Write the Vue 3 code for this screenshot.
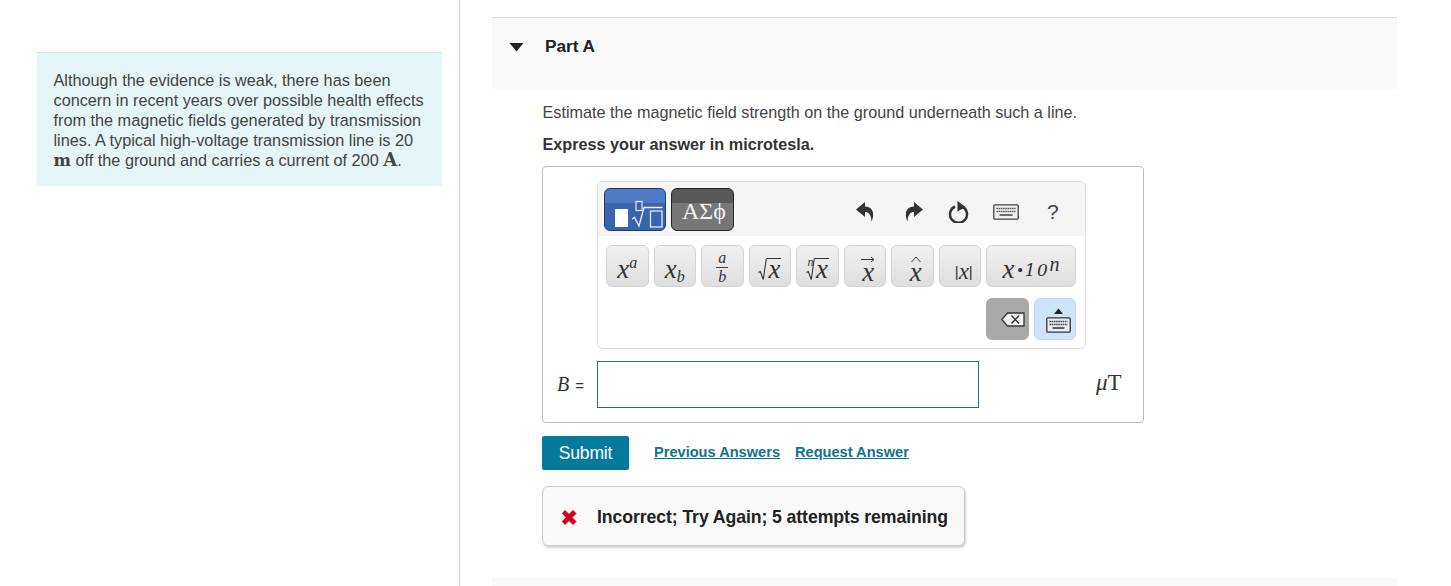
<template>
  <div class="page">
    <aside class="left-col">
      <div class="intro">
        Although the evidence is weak, there has been concern in recent years over possible health effects from the magnetic fields generated by transmission lines. A typical high-voltage transmission line is 20 <b class="unit">m</b> off the ground and carries a current of 200 <b class="unit big">A</b>.
      </div>
    </aside>

    <main class="right-col">
      <div class="part-head">
        <svg class="caret" width="15" height="10" viewBox="0 0 15 10"><path d="M0.5 1h14L7.5 9.500z" fill="#222" /></svg>
        <span>Part A</span>
      </div>

      <div class="part-body">
        <p class="prompt">Estimate the magnetic field strength on the ground underneath such a line.</p>
        <p class="prompt strong">Express your answer in microtesla.</p>

        <div class="answer-box">
          <div class="editor">
            <div class="editor-top">
              <button class="mode mode-on">
                <svg width="60" height="41" viewBox="0 0 60 41">
                  <rect x="10" y="20" width="13" height="18" fill="#fff" />
                  <rect x="31" y="12.500" width="6" height="9" fill="none" stroke="#dfe8f7" stroke-width="1.200" />
                  <path d="M27 30l2.500-1.500 4.500 8.500 5-18.500h18.500" fill="none" stroke="#eef3fb" stroke-width="1.300" />
                  <rect x="45.500" y="22" width="11.500" height="16" fill="none" stroke="#dfe8f7" stroke-width="1.300" />
                </svg>
              </button>
              <button class="mode mode-off">ΑΣϕ</button>

              <div class="tools">
                <svg class="tool undo" width="18" height="20" viewBox="0 0 18 20"><path d="M9 0L0 7.500 9 15v-5c3.500 0 6 2 6.500 9.500C18.500 13 18 5 9 4.500z" fill="#333" /></svg>
                <svg class="tool redo" width="18" height="20" viewBox="0 0 18 20"><path d="M9 0l9 7.500L9 15v-5c-3.500 0-6 2-6.500 9.500C-.5 13 0 5 9 4.500z" fill="#333" /></svg>
                <svg class="tool reset" width="21" height="22" viewBox="0 0 21 22"><path d="M7 5.500a8.500 8.500 0 1 0 7 0" fill="none" stroke="#333" stroke-width="2.500" /><path d="M9.500 0l8 6-8 4.500z" fill="#333" /></svg>
                <svg class="tool board" width="26" height="16" viewBox="0 0 26 16">
                  <rect x=".8" y=".8" width="24.400" height="14.400" rx="1" fill="#f1f1f1" stroke="#444" stroke-width="1.300" />
                  <path d="M3.500 4.500h19M3.500 7.500h19" stroke="#555" stroke-width="1.700" stroke-dasharray="1.600 .6" />
                  <path d="M6.500 11h13" stroke="#555" stroke-width="1.700" />
                </svg>
                <span class="help">?</span>
              </div>
            </div>

            <div class="key-row">
              <button class="key low"><i>x</i><sup><i>a</i></sup></button>
              <button class="key low"><i>x</i><sub><i>b</i></sub></button>
              <button class="key frac"><i>a</i><span class="bar"></span><i>b</i></button>
              <button class="key">
                <span class="rad">
                  <svg width="9" height="23" viewBox="0 0 9 23"><path d="M.3 14.500l2-1 3 8 3-21" fill="none" stroke="#333" stroke-width="1.100" /></svg>
                  <i class="over">x</i>
                </span>
              </button>
              <button class="key">
                <span class="rad">
                  <span class="idx"><i>n</i></span>
                  <svg width="9" height="23" viewBox="0 0 9 23"><path d="M.3 14.500l2-1 3 8 3-21" fill="none" stroke="#333" stroke-width="1.100" /></svg>
                  <i class="over">x</i>
                </span>
              </button>
              <button class="key accent">
                <svg width="14" height="7" viewBox="0 0 14 7"><path d="M0 3.500h13M10 1l3 2.500-3 2.500" fill="none" stroke="#333" stroke-width="1" /></svg>
                <i>x</i>
              </button>
              <button class="key accent">
                <svg width="10" height="7" viewBox="0 0 10 7"><path d="M.5 6L5 1l4.500 5" fill="none" stroke="#333" stroke-width="1" /></svg>
                <i>x</i>
              </button>
              <button class="key abs"><span>|</span><i>x</i><span>|</span></button>
              <button class="key wide low"><i>x</i><span class="dot">•</span><i class="ten">10</i><i class="pow">n</i></button>
            </div>

            <div class="key-row lower">
              <button class="key erase">
                <svg width="24" height="15" viewBox="0 0 24 15">
                  <path d="M6.500 1H23v13H6.500L.8 7.500z" fill="#f4f4f4" stroke="#333" stroke-width="1.300" />
                  <path d="M10.500 3.500l7.500 8M18 3.500l-7.500 8" stroke="#333" stroke-width="1.400" />
                </svg>
              </button>
              <button class="key kbd">
                <svg width="25" height="25" viewBox="0 0 25 25">
                  <path d="M8 6l4.500-5.500L17 6z" fill="#222" />
                  <rect x=".8" y="9.800" width="23.400" height="14.400" rx="1" fill="#e8eef5" stroke="#333" stroke-width="1.300" />
                  <path d="M3.500 13.500h18M3.500 16.500h18" stroke="#444" stroke-width="1.700" stroke-dasharray="1.600 .6" />
                  <path d="M6.500 20h12" stroke="#444" stroke-width="1.700" />
                </svg>
              </button>
            </div>
          </div>

          <div class="answer-row">
            <span class="var"><i>B</i> <span>=</span></span>
            <div class="field"></div>
            <span class="answer-unit"><i>μ</i>T</span>
          </div>
        </div>

        <div class="actions">
          <button class="submit">Submit</button>
          <a class="link first" href="#">Previous Answers</a>
          <a class="link" href="#">Request Answer</a>
        </div>

        <div class="feedback">
          <svg width="18" height="17" viewBox="0 0 18 17"><path d="M2.500 4.500L5 1.500 9 5.500 13 1.500 16 4.500 12 8.500 16 12.500 13 15.500 9 11.500 5 15.500 2.500 12.500 6 8.500z" fill="#d0021b" stroke="#d0021b" stroke-width="1" stroke-linejoin="round" /></svg>
          <span>Incorrect; Try Again; 5 attempts remaining</span>
        </div>
      </div>

      <div class="next-part"></div>
    </main>
  </div>
</template>

<script setup>
</script>

<style>
html, body { margin: 0; background: #fff; overflow: hidden; }
</style>

<style scoped>
.page {
  display: flex;
  width: 1451px; height: 586px;
  overflow: hidden;
  font-family: "Liberation Sans", Arial, sans-serif;
  color: #333;
  background: #fff;
}

.left-col {
  box-sizing: border-box;
  flex: none;
  width: 460px;
  padding: 52px 17px 0 37px;
  border-right: 1px solid #ccc;
}

.intro {
  box-sizing: border-box;
  width: 405px; height: 134px;
  padding: 17px 16px 0 16.500px;
  background: #e6f5f7;
  border-top: 1px solid #d5e5e5;
  font-size: 16.250px;
  line-height: 20px;
  color: #444;
}
.unit { font-family: "DejaVu Serif", serif; font-size: 16.500px; font-weight: 700; color: #444; }
.unit.big { font-size: 18px; }

.right-col {
  box-sizing: border-box;
  flex: none;
  width: 937px;
  padding: 17px 0 0 32px;
}

.part-head {
  box-sizing: border-box;
  display: flex; align-items: flex-start;
  height: 72px;
  padding: 18px 0 0 17px;
  background: #f9f9f9;
  border-top: 1px solid #ddd;
  font-size: 17.200px; font-weight: 700;
  line-height: 20px;
  color: #222;
}
.caret { margin: 6px 21px 0 0; }

.part-body { padding: 13px 0 0 50px; }

.prompt {
  margin: 0 0 12px .5px;
  font-size: 16.200px;
  line-height: 20px;
  color: #444;
}
.prompt.strong { font-weight: 700; color: #333; margin-bottom: 12px; }

.answer-box {
  box-sizing: border-box;
  width: 602px; height: 257px;
  padding: 14px 0 0 54px;
  border: 1px solid #bbb;
  border-radius: 4px;
}

.editor {
  box-sizing: border-box;
  width: 489px; height: 168px;
  border: 1px solid #ddd;
  border-radius: 6px;
  background: #fff;
}
.editor-top {
  display: flex; align-items: flex-start; gap: 5px;
  height: 54px;
  padding: 6px 0 0 6px;
  box-sizing: border-box;
  background: #f5f5f5;
  border-radius: 6px 6px 0 0;
}

.mode {
  box-sizing: border-box;
  flex: none;
  width: 62px; height: 43px;
  padding: 0;
  border: 1px solid #222;
  border-radius: 6px;
  display: flex; align-items: center; justify-content: center;
}
.mode-on { background: linear-gradient(#4f7bc2 0 33%, #3a64ad 33%); border-color: #1f3b70; }
.mode-off {
  width: 63px;
  padding: 4px 0 0 3px;
  background: linear-gradient(#585858 0 33%, #777 33%);
  color: #f2f2f2;
  font-family: "Liberation Serif", serif;
  font-size: 24px;
}

.tools {
  display: flex; align-items: center;
  height: 48px;
  margin-left: 117px;
}
.tool { flex: none; }
.redo { margin-left: 31px; }
.reset { margin-left: 25px; }
.board { margin-left: 24px; }
.help { font-size: 21px; color: #444; margin-left: 28px; }

.key-row {
  display: flex; gap: 5px;
  padding: 9px 0 0 8px;
}
.key-row.lower { justify-content: flex-end; padding: 11px 9px 0 0; gap: 5px; }

.key {
  box-sizing: border-box;
  flex: none;
  width: 42.500px; height: 42px;
  padding: 0;
  border: 1px solid #d4d4d4;
  border-radius: 6px;
  background: linear-gradient(#f1f1f1, #dedede);
  color: #333;
  font-family: "Liberation Serif", serif;
  font-size: 27px;
  line-height: 1;
  display: flex; align-items: center; justify-content: center;
  position: relative;
}
.key.low { padding-top: 7px; }
.key sup { font-size: 16px; line-height: 0; position: relative; top: -7px; vertical-align: baseline; }
.key sub { font-size: 16px; line-height: 0; position: relative; top: 7px; vertical-align: baseline; }

.frac { flex-direction: column; font-size: 16px; gap: 1px; padding-top: 3px; }
.bar { display: block; width: 12px; height: 1px; background: #444; }

.rad { display: flex; align-items: flex-start; position: relative; margin-top: 6px; }
.over {
  display: block;
  height: 22px;
  padding: 0 1px 0 2px;
  margin-left: -.5px;
  border-top: 1px solid #333;
  line-height: 21px;
  font-size: 27px;
}
.idx { position: absolute; left: 2px; top: -2px; font-size: 12px; line-height: 12px; }

.accent { flex-direction: column; padding: 6px 0 0 7px; gap: 0; }
.accent i { line-height: 20px; margin-top: -1px; }

.abs { font-size: 23px; padding: 10px 0 0 8px; }
.abs span { font-family: "Liberation Sans", sans-serif; font-size: 15px; }

.wide { width: 90px; }
.dot { font-size: 15px; margin: 0 2px 0 3px; font-family: "Liberation Sans", sans-serif; }
.ten { font-family: "DejaVu Serif", serif; font-size: 17px; letter-spacing: 1.500px; margin-top: 2px; }
.pow { font-size: 20px; position: relative; top: -6px; }

.erase { background: #a9a9a9; border-color: #a9a9a9; padding-left: 11px; }
.kbd { background: #cfe3fa; border-color: #c3d9f0; padding: 2px 0 0 8px; }

.answer-row {
  display: flex; align-items: center;
  margin: 12px 0 0 -40px;
  height: 47px;
}
.var { width: 40px; font-size: 20px; font-family: "Liberation Serif", serif; color: #333; white-space: nowrap; }
.var span { font-family: "Liberation Sans", sans-serif; font-size: 15px; margin-left: 1px; }
.field {
  box-sizing: border-box;
  width: 382px; height: 47px;
  border: 1px solid #1d6f86;
  background: #fff;
}
.answer-unit {
  margin: 0 0 3px 117px;
  font-family: "Liberation Serif", serif;
  font-size: 23px;
  color: #333;
}

.actions {
  display: flex; align-items: center;
  margin-top: 13px;
}
.submit {
  width: 87px; height: 34px;
  border: 0; padding: 0;
  border-radius: 2px;
  background: #067a9b;
  color: #fff;
  font-family: inherit;
  font-size: 17.500px;
  letter-spacing: -.2px;
}
.link {
  font-size: 14.600px; font-weight: 700;
  color: #0d7390;
  text-decoration: underline;
  margin: 0 0 2px 15px;
}
.link.first { margin-left: 25px; }

.feedback {
  box-sizing: border-box;
  display: flex; align-items: center; gap: 19px;
  width: 423px; height: 60px;
  margin-top: 16px;
  padding: 2px 0 0 17px;
  background: #f9f9f9;
  border: 1px solid #ccc;
  border-radius: 6px;
  box-shadow: 1px 2px 2px rgba(0,0,0,.18);
  font-size: 17.700px; font-weight: 700;
  color: #222;
  letter-spacing: -.1px;
}

.next-part {
  height: 12px;
  margin-top: 32px;
  background: #f9f9f9;
}
</style>
